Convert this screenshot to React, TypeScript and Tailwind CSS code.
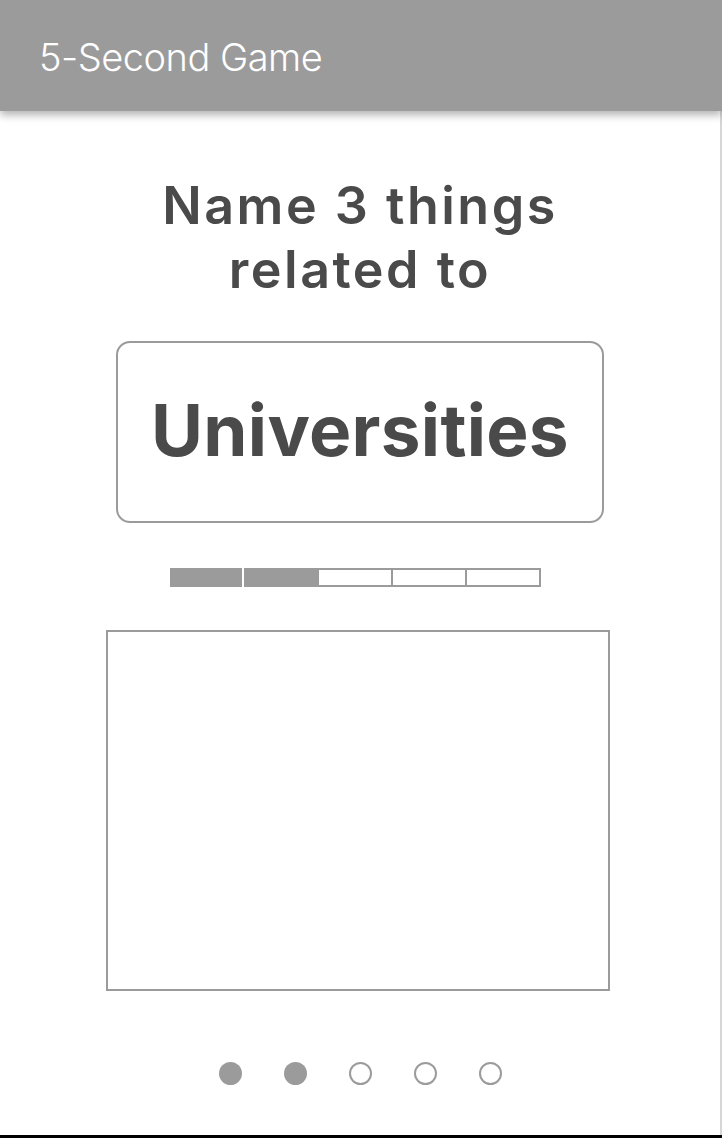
import React from "react";

export default function App() {
  const segs = [true, true, false, false, false];
  const dots = [true, true, false, false, false];
  return (
    <div
      className="w-[722px] h-[1138px] flex flex-col bg-white border-b-[3px] border-black overflow-hidden"
      style={{ fontFamily: "Inter, 'Noto Sans', sans-serif" }}
    >
      <header className="relative z-10 h-[111px] shrink-0 bg-[#9b9b9b] flex items-center pl-[39px] shadow-[0_4px_8px_rgba(0,0,0,0.3)]">
        <span className="text-white text-[38px] font-light tracking-[-0.5px] leading-none mt-[3px]">5-Second Game</span>
      </header>
      <main className="flex-1 flex flex-col items-center border-r-2 border-[#d6d6d6]">
        <h1 className="mt-[63px] text-[52px] leading-[64px] font-semibold text-[#4a4a4a] text-center tracking-[2.5px]">
          Name 3 things
          <br />
          related to
        </h1>
        <div className="mt-[39px] w-[488px] h-[182px] border-2 border-[#9b9b9b] rounded-[14px] flex items-center justify-center">
          <span className="text-[71px] font-bold text-[#4a4a4a] tracking-[0.3px] leading-none mt-[-4px]">Universities</span>
        </div>
        <div className="mt-[45px] flex ml-[-10px]">
          {segs.map((f, i) => (
            <div
              key={i}
              className={
                f
                  ? i === 0
                    ? "w-[74px] h-[19px] bg-[#9b9b9b] border-r-2 border-white"
                    : "w-[75px] h-[19px] bg-[#9b9b9b]"
                  : "w-[76px] h-[19px] border-2 border-[#9b9b9b] -ml-[2px]"
              }
            />
          ))}
        </div>
        <div className="mt-[43px] w-[504px] h-[361px] border-2 border-[#9b9b9b] ml-[-4px]" />
        <div className="mt-[71px] flex gap-[42px] items-center">
          {dots.map((f, i) => (
            <div
              key={i}
              className={
                f
                  ? "w-[23px] h-[23px] rounded-full bg-[#9b9b9b]"
                  : "w-[23px] h-[23px] rounded-full border-2 border-[#9b9b9b]"
              }
            />
          ))}
        </div>
      </main>
    </div>
  );
}
